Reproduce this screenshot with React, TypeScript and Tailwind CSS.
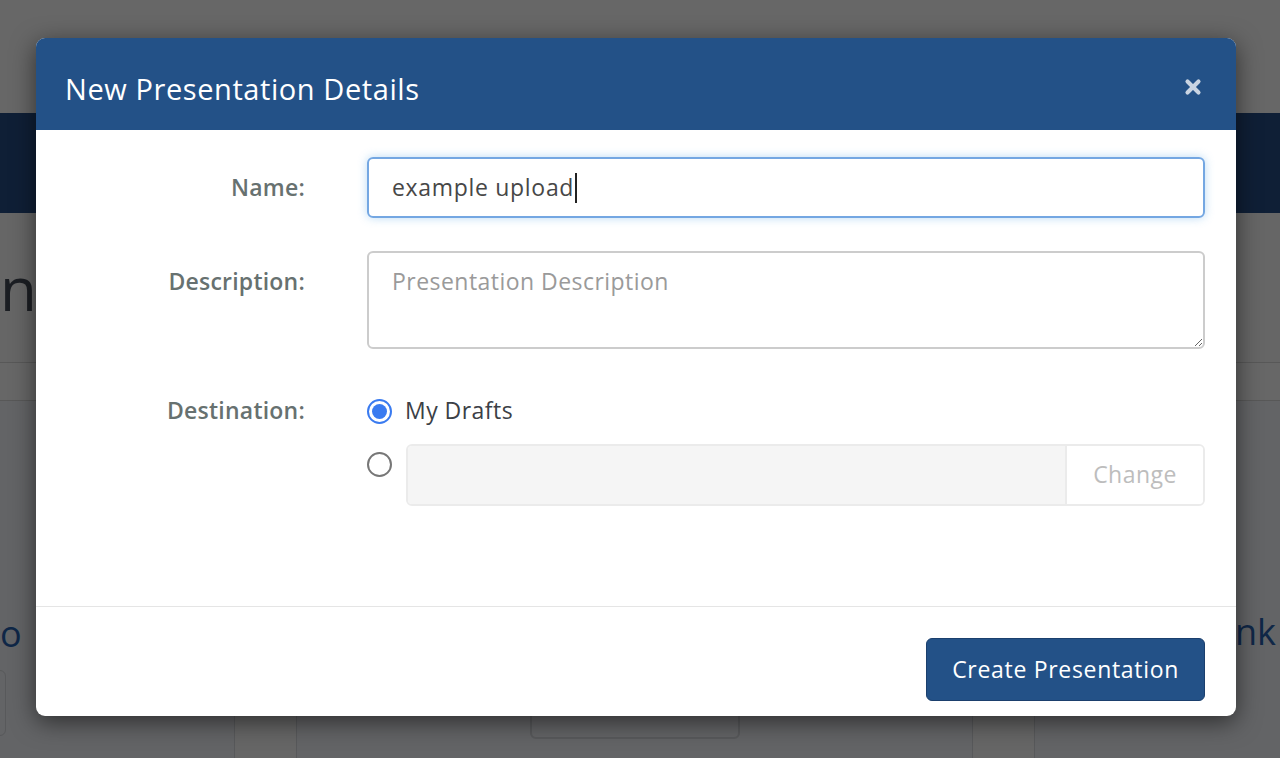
import { X } from "lucide-react";

const font = { fontFamily: "'Open Sans', Lato, sans-serif" };

function Backdrop() {
  return (
    <div className="flex h-full flex-col">
      <div className="h-[113px] bg-[#676767]" />
      <div className="h-[100px] bg-[#0f1f36]" />
      <div className="flex h-[150px] items-center border-b border-[#585858] bg-[#666666]">
        <span className="text-[60px] leading-none text-[#1b1e23]">n</span>
      </div>
      <div className="h-[38px] border-b border-[#585858] bg-[#676767]" />
      <div className="flex flex-1 bg-[#636466]">
        <div className="flex w-[235px] flex-col border-r border-[#58595b]">
          <div className="mt-[215px] text-[36px] leading-none text-[#0f2747]">o</div>
          <div className="mt-[18px] -ml-[40px] h-[66px] w-[46px] rounded-md border border-[#58595b]" />
        </div>
        <div className="w-[62px] border-r border-[#58595b] bg-[#666666]" />
        <div className="flex w-[676px] justify-center border-r border-[#58595b]">
          <div className="mt-[298px] h-[40px] w-[210px] rounded-md border-2 border-[#58595b]" />
        </div>
        <div className="w-[62px] border-r border-[#58595b] bg-[#666666]" />
        <div className="flex-1">
          <div className="mt-[213px] ml-[200px] text-[36px] leading-none text-[#0f2747]">nk</div>
        </div>
      </div>
    </div>
  );
}

function Label({ children }: { children: string }) {
  return (
    <div className="w-[238px] shrink-0 text-right text-[23px] font-semibold tracking-[0.01em] text-[#677170]">
      {children}
    </div>
  );
}

export default function App() {
  return (
    <div className="relative h-[758px] w-[1280px] overflow-hidden" style={font}>
      <Backdrop />

      <div className="absolute left-[36px] top-[38px] flex h-[678px] w-[1200px] flex-col overflow-hidden rounded-[9px] bg-white shadow-[0_6px_24px_rgba(0,0,0,0.55)]">
        <div className="flex h-[92px] shrink-0 items-center justify-between bg-[#235187] pl-[29px] pr-[32px] pt-[10px]">
          <h2 className="text-[29px] font-normal tracking-[0.02em] text-white">New Presentation Details</h2>
          <X className="-mt-[4px] h-[22px] w-[22px] text-[#c9d4e2]" strokeWidth={4.5} />
        </div>

        <div className="h-[477px] shrink-0 border-b border-[#e5e5e5] px-[31px] pt-[27px]">
          <div className="flex items-center gap-[62px]">
            <Label>Name:</Label>
            <div className="flex h-[61px] flex-1 items-center rounded-[6px] border-2 border-[#74a7e2] px-[23px] shadow-[0_0_10px_rgba(102,175,233,0.45)]">
              <span className="text-[23px] tracking-[0.03em] text-[#474747]">example upload</span>
              <span className="ml-[1px] h-[30px] w-[2px] bg-[#222]" />
            </div>
          </div>

          <div className="mt-[33px] flex items-start gap-[62px]">
            <div className="pt-[13px]">
              <Label>Description:</Label>
            </div>
            <textarea
              className="h-[98px] flex-1 rounded-[6px] border-2 border-[#cccccc] px-[23px] pt-[12px] text-[23px] leading-[32px] tracking-[0.02em] text-[#474747] outline-none placeholder:text-[#9a9a9a]"
              placeholder="Presentation Description"
              readOnly
            />
          </div>

          <div className="mt-[44px] flex items-start gap-[62px]">
            <div>
              <Label>Destination:</Label>
            </div>
            <div className="flex flex-1 flex-col gap-[16px]">
              <div className="flex items-center gap-[13px]">
                <span className="mt-[2px] flex h-[25px] w-[25px] items-center justify-center rounded-full border-2 border-[#3a7bf0]">
                  <span className="h-[15px] w-[15px] rounded-full bg-[#3a7bf0]" />
                </span>
                <span className="text-[23px] tracking-[0.02em] text-[#3b4046]">My Drafts</span>
              </div>
              <div className="flex items-start gap-[14px]">
                <span className="mt-[8px] h-[25px] w-[25px] shrink-0 rounded-full border-2 border-[#777777]" />
                <div className="flex h-[62px] flex-1 overflow-hidden rounded-[6px] border-2 border-[#ebebeb]">
                  <div className="flex-1 bg-[#f5f5f5]" />
                  <div className="flex w-[138px] items-center justify-center border-l-2 border-[#ebebeb] bg-white text-[23px] tracking-[0.02em] text-[#bdbdbd]">
                    Change
                  </div>
                </div>
              </div>
            </div>
          </div>
        </div>

        <div className="flex flex-1 justify-end px-[31px] pt-[31px]">
          <button
            className="h-[63px] rounded-[6px] border border-[#1b3f6d] bg-[#235187] px-[25px] text-[23px] tracking-[0.03em] text-white"
            type="button"
          >
            Create Presentation
          </button>
        </div>
      </div>
    </div>
  );
}
